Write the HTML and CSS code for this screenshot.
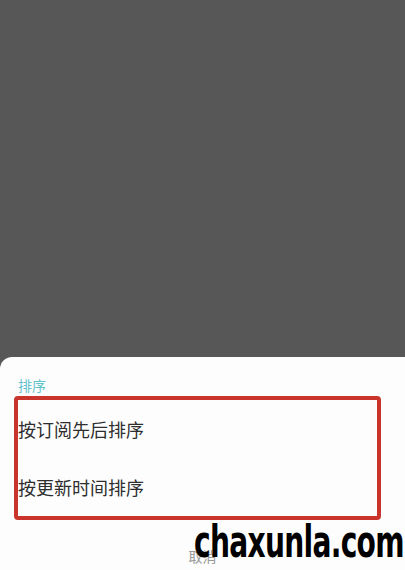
FILE: index.html
```html
<!DOCTYPE html>
<html lang="zh">
<head>
  <meta charset="UTF-8">
  <meta name="viewport" content="width=device-width, initial-scale=1.0">
  <title>排序</title>
  <link rel="stylesheet" href="styles.css">
</head>
<body>
  <main class="screen">
    <div class="backdrop"></div>
    <div class="sheet">
      <p class="sheet_title">排序</p>
      <ul class="options">
        <li class="option">按订阅先后排序</li>
        <li class="option">按更新时间排序</li>
      </ul>
      <a href="#" class="cancel">取消</a>
    </div>
    <div class="watermark">chaxunla.com</div>
  </main>
</body>
</html>
```

FILE: styles.css
```css
html, body {
  margin: 0;
  padding: 0;
}
body {
  font-family: "Noto Sans CJK SC", "Noto Sans", sans-serif;
  background-color: #fff;
}
.screen {
  position: relative;
  width: 405px;
  height: 570px;
  overflow: hidden;
  display: flex;
  flex-direction: column;
  background-color: #575757;
}
.backdrop {
  height: 357px;
  flex-shrink: 0;
}
.sheet {
  flex: 1;
  background-color: #fdfdfd;
  border-top-left-radius: 12px;
  padding: 20px 24px 0 14px;
  display: flex;
  flex-direction: column;
}
.sheet_title {
  margin: 0 0 3px 4px;
  font-size: 14px;
  line-height: 16px;
  color: #62c3cc;
}
.options {
  list-style: none;
  margin: 0;
  padding: 0;
  border: 4px solid #c9352c;
  border-radius: 4px;
}
.option {
  height: 58px;
  line-height: 58px;
  font-size: 18px;
  color: #2e2e2e;
}
.cancel {
  align-self: center;
  margin-top: 26px;
  margin-left: 10px;
  font-size: 14px;
  color: #999;
  text-decoration: none;
}
/* site watermark stamped over the screenshot */
.watermark {
  position: absolute;
  left: 194px;
  top: 518px;
  font-family: "DejaVu Sans Condensed", "DejaVu Sans", sans-serif;
  font-weight: bold;
  font-size: 44px;
  line-height: 48px;
  letter-spacing: -1px;
  color: #000;
  transform: scaleX(0.71);
  transform-origin: left top;
}
```
